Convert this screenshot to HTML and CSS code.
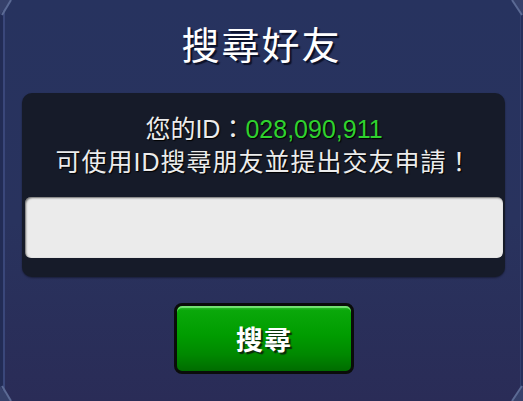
FILE: index.html
```html
<!DOCTYPE html>
<html lang="zh-Hant">
<head>
<meta charset="utf-8">
<title>搜尋好友</title>
<link rel="stylesheet" href="styles.css">
</head>
<body>
<div class="panel">
  <svg class="corner corner-tl" width="14" height="16" viewBox="0 0 14 16"><polygon points="0,0 11,0 0,15" fill="#36416b"/><line x1="11" y1="0" x2="2" y2="15" stroke="#5b6a94" stroke-width="2"/></svg>
  <svg class="corner corner-tr" width="14" height="16" viewBox="0 0 14 16"><polygon points="14,0 3,0 14,15" fill="#36416b"/><line x1="3" y1="0" x2="13" y2="15" stroke="#5b6a94" stroke-width="2"/></svg>
  <svg class="corner corner-bl" width="14" height="16" viewBox="0 0 14 16"><polygon points="0,16 11,16 0,1" fill="#36416b"/><line x1="11" y1="16" x2="2" y2="1" stroke="#5b6a94" stroke-width="2"/></svg>
  <svg class="corner corner-br" width="14" height="16" viewBox="0 0 14 16"><polygon points="14,16 3,16 14,1" fill="#36416b"/><line x1="3" y1="16" x2="13" y2="1" stroke="#5b6a94" stroke-width="2"/></svg>

  <h1 class="title">搜尋好友</h1>

  <div class="info-box">
    <p class="line">您的ID：<span class="id-num">028,090,911</span></p>
    <p class="line line-wide">可使用ID搜尋朋友並提出交友申請！</p>
    <div class="id-input"></div>
  </div>

  <div class="actions">
    <button class="search-btn" type="button">搜尋</button>
  </div>
</div>
</body>
</html>
```

FILE: styles.css
```css
html, body {
  margin: 0;
  padding: 0;
}

body {
  width: 523px;
  height: 401px;
  overflow: hidden;
  font-family: "Liberation Sans", "Noto Sans CJK TC", sans-serif;
}

.panel {
  position: relative;
  box-sizing: border-box;
  width: 523px;
  height: 401px;
  padding-top: 24px;
  background: linear-gradient(180deg, #27335f 0%, #29335e 55%, #2a2c57 100%);
  box-shadow: inset 3px 0 0 #222c55, inset 5px 0 0 #3a477a, inset -2px 0 0 #252f5a, inset -3px 0 0 #33406e;
}

.corner {
  position: absolute;
  display: block;
}
.corner-tl { left: 0; top: 0; }
.corner-tr { right: 0; top: 0; }
.corner-bl { left: 0; bottom: 0; }
.corner-br { right: 0; bottom: 0; }

.title {
  margin: 0;
  height: 40px;
  line-height: 38px;
  text-align: center;
  font-family: "Noto Sans CJK TC", sans-serif;
  font-weight: 400;
  font-size: 38px;
  color: #ffffff;
  text-shadow: 2px 2px 1px #0c1128;
  letter-spacing: 2px;
}

.info-box {
  margin: 29px 18px 0 22px;
  padding: 20px 2px 19px 3px;
  background: #161b29;
  border-radius: 10px;
  box-shadow: 0 1px 2px rgba(0, 0, 0, 0.4);
}

.line {
  margin: 0;
  height: 33px;
  line-height: 33px;
  text-align: center;
  font-size: 25px;
  color: #ececec;
  text-shadow: 1px 1px 1px #000;
  white-space: nowrap;
}

.line-wide {
  letter-spacing: 1px;
}

.id-num {
  color: #2fd22f;
}

.id-input {
  margin-top: 18px;
  height: 61px;
  background: #ebebeb;
  border-radius: 6px;
  box-shadow: inset 1px 1px 2px rgba(0, 0, 0, 0.55);
}

.actions {
  display: flex;
  justify-content: center;
  padding-left: 5px;
  margin-top: 26px;
}

.search-btn {
  box-sizing: border-box;
  width: 180px;
  height: 71px;
  padding: 0;
  border: 3px solid #0a0d0a;
  border-radius: 8px;
  background: linear-gradient(180deg, #3cc43c 0%, #0aa80a 7%, #009c00 45%, #008800 75%, #006c00 100%);
  box-shadow: inset 0 2px 0 rgba(170, 255, 170, 0.55);
  font-family: "Noto Sans CJK TC", sans-serif;
  font-weight: 700;
  font-size: 27px;
  line-height: 1;
  color: #ffffff;
  text-shadow: 2px 2px 1px #0b2a0b;
  letter-spacing: 1px;
}
```
